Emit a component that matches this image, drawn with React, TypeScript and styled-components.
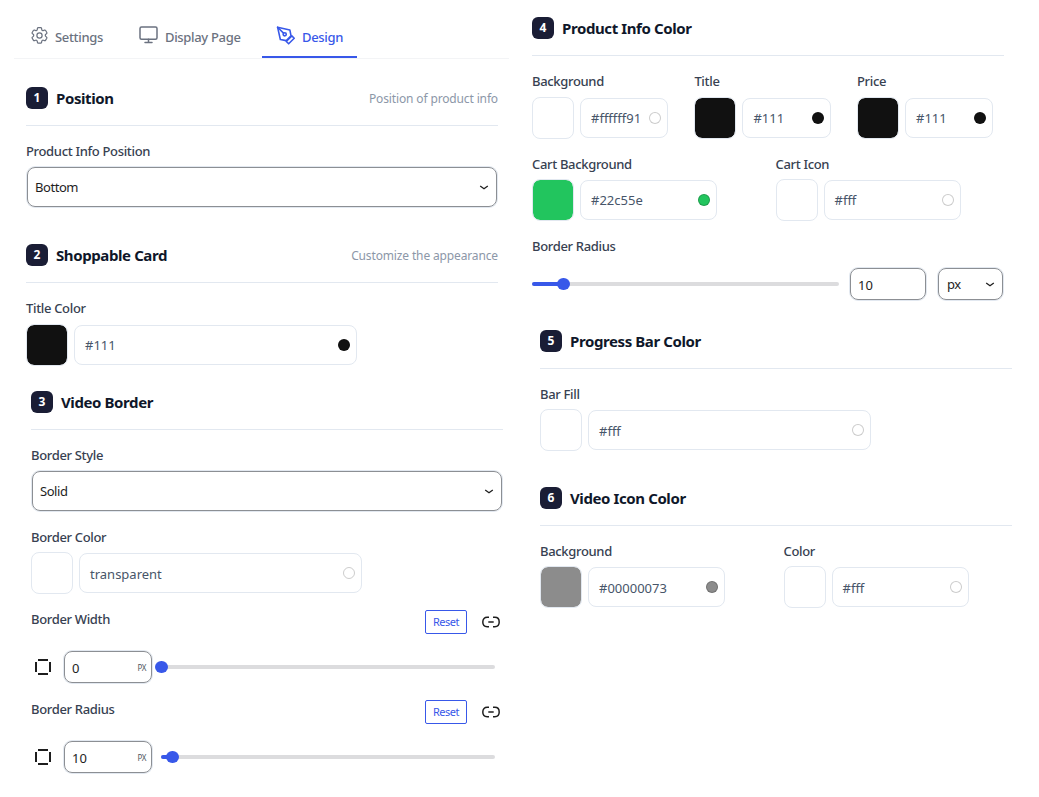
import React from "react";
import styled, { createGlobalStyle } from "styled-components";

const GlobalStyle = createGlobalStyle`
  * { box-sizing: border-box; }
  body { margin: 0; background: #fff; font-family: "Noto Sans", "Open Sans", sans-serif; font-size: 13px; color: #1e1e1e; }
  svg { display: block; flex: none; }
`;

const Page = styled.main`
  display: flex;
  width: 1039px;
  height: 797px;
  overflow: hidden;
`;
const LeftColumn = styled.div`
  width: 495px;
  margin-left: 14px;
  flex: none;
`;
const RightColumn = styled.div`
  width: 490px;
  margin-left: 23px;
  padding-top: 17px;
  flex: none;
`;

const Tabs = styled.nav`
  display: flex;
  height: 59px;
  border-bottom: 1px solid #f3f4f6;
`;
const Tab = styled.button<{ $active?: boolean; $width: number; $pad: number }>`
  display: flex;
  align-items: center;
  gap: 7px;
  width: ${(p) => p.$width}px;
  height: 58px;
  padding: 18px 0 0 ${(p) => p.$pad}px;
  border: 0;
  border-bottom: 2px solid ${(p) => (p.$active ? "#3858e9" : "transparent")};
  background: none;
  color: ${(p) => (p.$active ? "#3858e9" : "#6b7280")};
  font: 500 13px/20px "Noto Sans", sans-serif;
  letter-spacing: -0.33px;
  white-space: nowrap;
  & > svg { margin-top: -4px; }
`;

const Section = styled.section<{ $left: number; $top: number }>`
  width: 472px;
  margin: ${(p) => p.$top}px 0 0 ${(p) => p.$left}px;
`;
const SectionHead = styled.header`
  display: flex;
  align-items: center;
  height: 39px;
  padding-bottom: 16px;
  border-bottom: 1px solid #e2e8f0;
`;
const Badge = styled.span`
  width: 22px;
  height: 22px;
  border-radius: 6px;
  background: #1a1d35;
  color: #fff;
  font-size: 12px;
  font-weight: 700;
  line-height: 21px;
  text-align: center;
`;
const Title = styled.h2`
  margin: 0 0 0 8px;
  color: #0f172a;
  font-size: 15px;
  font-weight: 700;
  line-height: 22px;
  letter-spacing: -0.4px;
  white-space: nowrap;
`;
const Hint = styled.span`
  margin: 2px 0 0 auto;
  color: #8c97a8;
  font-size: 12px;
  line-height: 20px;
  letter-spacing: -0.14px;
  white-space: nowrap;
`;

const Label = styled.div`
  height: 20px;
  color: #374151;
  font-size: 13px;
  font-weight: 500;
  line-height: 20px;
  letter-spacing: -0.33px;
  white-space: nowrap;
`;
const Control = styled.div<{ $top: number; $gap?: number; $width?: number }>`
  display: flex;
  flex-direction: column;
  gap: ${(p) => p.$gap ?? 5}px;
  width: ${(p) => (p.$width ? p.$width + "px" : "auto")};
  flex: none;
  margin-top: ${(p) => p.$top}px;
`;
const Row = styled.div`
  display: flex;
`;

const SelectBox = styled.div<{ $small?: boolean }>`
  display: flex;
  align-items: center;
  justify-content: space-between;
  width: ${(p) => (p.$small ? "65px" : "470px")};
  height: ${(p) => (p.$small ? 32 : 40)}px;
  margin: ${(p) => (p.$small ? "0 0 0 12px" : "1px")};
  padding: 0 7px;
  border: 1px solid #8c8f94;
  border-radius: 8px;
  box-shadow: 0 0 0 1px #e2e8f0;
  letter-spacing: -0.45px;
  ${(p) => p.$small && "padding-left: 8px;"}
`;
const ColorRow = styled.div`
  display: flex;
  align-items: center;
  gap: 6px;
  height: 42px;
`;
const Swatch = styled.span<{ $color: string }>`
  width: 42px;
  height: 42px;
  border: 1px solid #e2e8f0;
  border-radius: 8px;
  background: ${(p) => p.$color};
  background-clip: padding-box;
`;
const ColorInput = styled.div<{ $width: number }>`
  display: flex;
  align-items: center;
  justify-content: space-between;
  width: ${(p) => p.$width}px;
  height: 40px;
  padding: 0 6px 0 10px;
  border: 1px solid #e2e8f0;
  border-radius: 8px;
  color: #475569;
  font-size: 13px;
`;
const Value = styled.span<{ $low?: boolean }>`
  margin-top: ${(p) => (p.$low ? 2 : 0)}px;
`;
const Dot = styled.span<{ $color: string }>`
  width: 12px;
  height: 12px;
  flex: none;
  border: 1px solid rgba(0, 0, 0, 0.2);
  border-radius: 50%;
  background: ${(p) => p.$color};
`;

const SideHead = styled.div<{ $top: number }>`
  display: flex;
  height: 24px;
  margin-top: ${(p) => p.$top}px;
  & > ${Label} { margin-top: -1px; }
`;
const ResetButton = styled.button`
  width: 42px;
  height: 24px;
  margin: 0 15px 0 auto;
  padding: 0;
  border: 1px solid #3858e9;
  border-radius: 2px;
  background: #fff;
  color: #3858e9;
  font: 400 11px/20px "Noto Sans", sans-serif;
  letter-spacing: -0.45px;
`;
const LinkSlot = styled.span`
  display: flex;
  align-items: center;
  width: 21px;
`;
const SideRow = styled.div`
  display: flex;
  align-items: center;
  height: 32px;
  margin-top: 17px;
  padding-left: 4px;
`;
const NumberBox = styled.div<{ $width: number; $left: number }>`
  display: flex;
  align-items: center;
  justify-content: space-between;
  width: ${(p) => p.$width}px;
  height: 32px;
  margin-left: ${(p) => p.$left}px;
  padding: 2px 5px 0 7px;
  border: 1px solid #8c8f94;
  border-radius: 8px;
  box-shadow: 0 0 0 1px #e2e8f0;
  flex: none;
`;
const Unit = styled.span`
  margin-top: -2px;
  color: #50575e;
  font-size: 8px;
  letter-spacing: -0.4px;
`;
const Track = styled.div<{ $width: number; $left?: number }>`
  display: flex;
  align-items: center;
  width: ${(p) => p.$width}px;
  height: 4px;
  margin-left: ${(p) => p.$left ?? 0}px;
  border-radius: 2px;
  background: #dcdcde;
  flex: none;
`;
const Fill = styled.span`
  height: 4px;
  border-radius: 2px;
  background: #3858e9;
`;
const Thumb = styled.span`
  width: 12.5px;
  height: 12px;
  margin-left: -5.75px;
  border-radius: 50%;
  background: #3858e9;
  flex: none;
`;
const RangeRow = styled.div`
  display: flex;
  align-items: center;
  height: 32px;
  margin-top: 12px;
`;

const Chevron = () => (
  <svg width="10" height="10" viewBox="0 0 10 10" fill="none" stroke="#1e1e1e" strokeWidth="1.3">
    <path d="M1.2 4 L5 6.8 L8.8 4" />
  </svg>
);
const GearIcon = () => (
  <svg width="17" height="17" viewBox="2.2 2.2 19.6 19.6" fill="none" stroke="currentColor" strokeWidth="1.4" strokeLinecap="round" strokeLinejoin="round">
    <path d="M9.6 3.9c.1-.5.6-.9 1.1-.9h2.6c.5 0 1 .4 1.1.9l.2 1.3c.1.4.3.7.6.9l.2.1c.3.2.7.2 1.1.1l1.2-.5c.5-.2 1.1 0 1.4.5l1.3 2.2c.3.5.2 1.1-.3 1.4l-1 .8c-.3.2-.4.6-.4 1v.3c0 .4.1.7.4 1l1 .8c.4.4.5 1 .3 1.4l-1.3 2.2c-.3.5-.9.7-1.4.5l-1.2-.4c-.4-.1-.8-.1-1.1.1l-.2.1c-.3.2-.5.5-.6.9l-.2 1.3c-.1.5-.6.9-1.1.9h-2.6c-.5 0-1-.4-1.1-.9l-.2-1.3c-.1-.4-.3-.7-.6-.9l-.2-.1c-.3-.2-.7-.2-1.1-.1l-1.2.4c-.5.2-1.1 0-1.4-.5l-1.3-2.2c-.3-.5-.2-1.1.3-1.4l1-.8c.3-.3.4-.6.4-1v-.3c0-.4-.1-.8-.4-1l-1-.8c-.5-.3-.6-.9-.3-1.4l1.3-2.2c.3-.5.9-.7 1.4-.5l1.2.5c.4.1.8.1 1.1-.1l.2-.1c.3-.2.5-.5.6-.9z" />
    <circle cx="12" cy="12" r="3" />
  </svg>
);
const MonitorIcon = () => (
  <svg width="19" height="18" viewBox="0 0 19 18" fill="none" stroke="currentColor" strokeWidth="1.5" strokeLinecap="round">
    <rect x="1" y="1" width="17" height="12.2" rx="1.5" />
    <path d="M9.5 13.2v3.3M6 16.5h7" />
  </svg>
);
const PenIcon = () => (
  <svg width="19" height="19" viewBox="0 0 24 24" fill="none" stroke="currentColor" strokeWidth="2" strokeLinecap="round" strokeLinejoin="round">
    <path d="m12 19 7-7 3 3-7 7-3-3z" transform="translate(1 .5)" />
    <path d="m19 12.5-1.5-7.5L2 1.5l3.5 15.5 7.5 1.5z" />
    <path d="m2 1.500 7.500 7.500" />
    <circle cx="11" cy="10.500" r="2" />
  </svg>
);
const LinkIcon = () => (
  <svg width="18" height="12" viewBox="0 0 18 12" fill="none" stroke="#1e1e1e" strokeWidth="1.5">
    <path d="M7 1.300H5.200C2.600 1.300 .8 3 .8 6S2.600 10.700 5.200 10.700H7M11 1.300h1.800C15.400 1.300 17.200 3 17.200 6S15.400 10.700 12.800 10.700H11M6.300 6h5.400" />
  </svg>
);
const SidesIcon = () => (
  <svg width="16" height="16" viewBox="0 0 16 16" fill="#1e1e1e">
    <path d="M3 0h10v2H3zM3 14h10v2H3zM0 3h2v10H0zM14 3h2v10h-2z" />
  </svg>
);

const Head = ({ n, title, hint }: { n: number; title: string; hint?: string }) => (
  <SectionHead>
    <Badge>{n}</Badge>
    <Title>{title}</Title>
    {hint && <Hint>{hint}</Hint>}
  </SectionHead>
);

type ColorProps = { label: string; value: string; color?: string; field: number; top: number; gap?: number; width?: number; low?: boolean };
const ColorControl = ({ label, value, color, field, top, gap, width, low }: ColorProps) => (
  <Control $top={top} $gap={gap} $width={width}>
    <Label>{label}</Label>
    <ColorRow>
      <Swatch $color={color ?? value} />
      <ColorInput $width={field}>
        <Value $low={low}>{value}</Value>
        <Dot $color={color ?? value} />
      </ColorInput>
    </ColorRow>
  </Control>
);

const Slider = ({ width, left, fill }: { width: number; left?: number; fill: number }) => (
  <Track $width={width} $left={left}>
    <Fill style={{ width: fill }} />
    <Thumb />
  </Track>
);

const SideControl = ({ label, value, fill, top }: { label: string; value: string; fill: number; top: number }) => (
  <>
    <SideHead $top={top}>
      <Label>{label}</Label>
      <ResetButton>Reset</ResetButton>
      <LinkSlot><LinkIcon /></LinkSlot>
    </SideHead>
    <SideRow>
      <SidesIcon />
      <NumberBox $width={88} $left={13}>
        {value}
        <Unit>PX</Unit>
      </NumberBox>
      <Slider width={334} left={9} fill={fill} />
    </SideRow>
  </>
);

export default function App() {
  return (
    <Page>
      <GlobalStyle />
      <LeftColumn>
        <Tabs>
          <Tab $width={109} $pad={17}><GearIcon />Settings</Tab>
          <Tab $width={139} $pad={16}><MonitorIcon />Display Page</Tab>
          <Tab $width={95} $pad={14} $active><PenIcon />Design</Tab>
        </Tabs>
        <Section $left={12} $top={28}>
          <Head n={1} title="Position" hint="Position of product info" />
          <Control $top={15}>
            <Label>Product Info Position</Label>
            <SelectBox>Bottom<Chevron /></SelectBox>
          </Control>
        </Section>
        <Section $left={12} $top={36}>
          <Head n={2} title="Shoppable Card" hint="Customize the appearance" />
          <ColorControl label="Title Color" value="#111" field={283} top={15} gap={6} />
        </Section>
        <Section $left={17} $top={25}>
          <Head n={3} title="Video Border" />
          <Control $top={15}>
            <Label>Border Style</Label>
            <SelectBox>Solid<Chevron /></SelectBox>
          </Control>
          <ColorControl label="Border Color" value="transparent" field={283} top={15} low />
          <SideControl label="Border Width" value="0" fill={0} top={16} />
          <SideControl label="Border Radius" value="10" fill={11} top={17} />
        </Section>
      </LeftColumn>
      <RightColumn>
        <Section $left={0} $top={0}>
          <Head n={4} title="Product Info Color" />
          <Row>
            <ColorControl label="Background" value="#ffffff91" field={88} top={15} gap={6} width={162.4} />
            <ColorControl label="Title" value="#111" field={89} top={15} gap={6} width={162.6} />
            <ColorControl label="Price" value="#111" field={88} top={15} gap={6} />
          </Row>
          <Row>
            <ColorControl label="Cart Background" value="#22c55e" field={137} top={15} width={243.5} />
            <ColorControl label="Cart Icon" value="#fff" field={137} top={15} />
          </Row>
          <Control $top={15} $gap={0}>
            <Label>Border Radius</Label>
            <RangeRow>
              <Slider width={307} fill={31} />
              <NumberBox $width={76} $left={11}>10</NumberBox>
              <SelectBox $small>px<Chevron /></SelectBox>
            </RangeRow>
          </Control>
        </Section>
        <Section $left={8} $top={30}>
          <Head n={5} title="Progress Bar Color" />
          <ColorControl label="Bar Fill" value="#fff" field={283} top={15} low />
        </Section>
        <Section $left={8} $top={36}>
          <Head n={6} title="Video Icon Color" />
          <Row>
            <ColorControl label="Background" value="#00000073" color="#8c8c8c" field={137} top={15} width={243.5} low />
            <ColorControl label="Color" value="#fff" field={137} top={15} low />
          </Row>
        </Section>
      </RightColumn>
    </Page>
  );
}
